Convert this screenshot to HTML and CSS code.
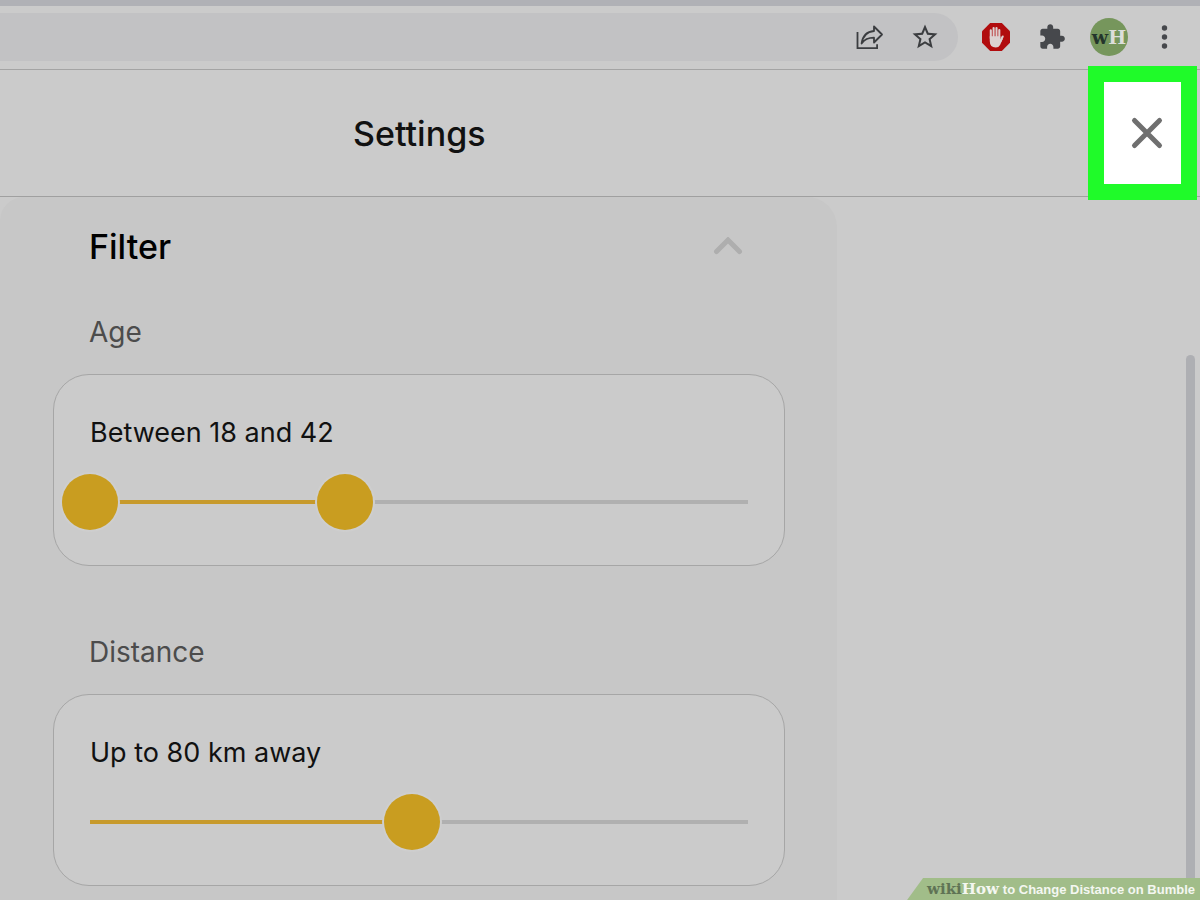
FILE: index.html
```
<!DOCTYPE html>
<html lang="en">
<head>
    <meta charset="UTF-8">
    <meta name="viewport" content="width=device-width, initial-scale=1.0">
    <title>Settings</title>
    <link rel="stylesheet" href="styles.css">
</head>
<body>

    <div class="toolbar">
        <div class="address-bar">
            <input type="text" class="address-input" aria-label="Address">
            <button class="icon-btn" aria-label="Share">
                <svg width="28" height="28" viewBox="0 0 28 28" fill="none" stroke="#3b3d40" stroke-width="1.8">
                    <path d="M1.5 9v16.2h19.6v-4"/>
                    <path d="M18 3.500l8 8-8 8v-4.800C12.500 14.700 8.700 16 5.600 20.500 6.600 13.500 11 8.600 18 8z" stroke-linejoin="round"/>
                </svg>
            </button>
            <button class="icon-btn" aria-label="Bookmark">
                <svg width="30" height="30" viewBox="0 0 24 24" fill="#3b3d40">
                    <path d="M22 9.240l-7.190-.62L12 2 9.190 8.630 2 9.240l5.460 4.730L5.820 21 12 17.270 18.180 21l-1.630-7.030L22 9.240zM12 15.400l-3.760 2.270 1-4.280-3.320-2.880 4.380-.38L12 6.100l1.710 4.040 4.380.38-3.320 2.880 1 4.280L12 15.400z"/>
                </svg>
            </button>
        </div>
        <button class="icon-btn" aria-label="AdBlock">
            <svg width="28" height="28" viewBox="0 0 28 28">
                <path d="M8.200 0h11.600L28 8.200v11.600L19.800 28H8.200L0 19.800V8.200z" fill="#b10c0e"/>
                <g stroke="#dcd2d2" stroke-width="2.100" stroke-linecap="round" fill="none">
                    <path d="M8.800 7.200v8M11.600 5v10M14.500 5v10M17.300 7v8M20.700 13.500l-2.700 5.500"/>
                </g>
                <path d="M7.750 13.200h10.600v3.300l1.600-1.300.8.800-2.700 6q-1.300 2.500-4.300 2.500-6 0-6-6.500z" fill="#dcd2d2"/>
            </svg>
        </button>
        <button class="icon-btn extensions" aria-label="Extensions">
            <svg width="28" height="28" viewBox="0 0 24 24" fill="#46484c">
                <path d="M20.500 11H19V7c0-1.100-.9-2-2-2h-4V3.500C13 2.120 11.880 1 10.500 1S8 2.120 8 3.500V5H4c-1.100 0-1.990.9-1.990 2v3.800H3.500c1.490 0 2.700 1.210 2.700 2.700s-1.210 2.700-2.700 2.700H2V20c0 1.100.9 2 2 2h3.800v-1.500c0-1.490 1.210-2.700 2.700-2.700 1.490 0 2.700 1.210 2.700 2.700V22H17c1.100 0 2-.9 2-2v-4h1.500c1.380 0 2.500-1.120 2.500-2.500S21.880 11 20.500 11z"/>
            </svg>
        </button>
        <button class="avatar"><span class="avatar-dark">w</span>H</button>
        <button class="icon-btn" aria-label="Menu">
            <svg width="24" height="24" viewBox="0 0 24 24" fill="#46484c">
                <circle cx="12.500" cy="3" r="2.700"/>
                <circle cx="12.500" cy="12" r="2.700"/>
                <circle cx="12.500" cy="21" r="2.700"/>
            </svg>
        </button>
    </div>

    <header class="page-header">
        <h1>Settings</h1>
        <button class="close-btn" aria-label="Close">
            <svg width="34" height="34" viewBox="0 0 34 34" stroke="#6f6f6f" stroke-width="5" stroke-linecap="round">
                <path d="M4.500 4.500l25 25M29.500 4.500l-25 25"/>
            </svg>
        </button>
    </header>

    <main class="content">
        <section class="panel">
            <div class="panel-header">
                <h2>Filter</h2>
                <button class="icon-btn" aria-label="Collapse filter">
                    <svg width="30" height="20" viewBox="0 0 30 20" fill="none" stroke="#aeaeae" stroke-width="5" stroke-linecap="round">
                        <path d="M3.500 14.500L15 3l11.500 11.500"/>
                    </svg>
                </button>
            </div>

            <h3>Age</h3>
            <div class="card">
                <label for="ageMax">Between 18 and 42</label>
                <div class="slider">
                    <div class="slider-track"><div class="slider-fill" style="width: 39%"></div></div>
                    <input type="range" id="ageMin" min="18" max="80" value="18" aria-label="Minimum age">
                    <input type="range" id="ageMax" min="18" max="80" value="42">
                </div>
            </div>

            <h3>Distance</h3>
            <div class="card">
                <label for="distance">Up to 80 km away</label>
                <div class="slider">
                    <div class="slider-track"><div class="slider-fill" style="width: 49%"></div></div>
                    <input type="range" id="distance" min="3" max="160" value="80">
                </div>
            </div>
        </section>
        <div class="scrollbar"></div>
    </main>

    <div class="watermark">
        <span class="brand"><span class="brand-wiki">wiki</span>How</span>
        <span>to Change Distance on Bumble</span>
    </div>

</body>
</html>
```
FILE: styles.css
```
* {
    box-sizing: border-box;
}

body {
    margin: 0;
    min-height: 100vh;
    display: flex;
    flex-direction: column;
    position: relative;
    background: #cbcbcb;
    color: #111;
    font-family: Inter, "Liberation Sans", sans-serif;
}

h1, h2, h3 {
    margin: 0;
}

button {
    padding: 0;
    border: none;
    background: none;
    cursor: pointer;
}

svg {
    display: block;
}

/* Browser toolbar */
.toolbar {
    display: flex;
    align-items: center;
    gap: 24px;
    height: 70px;
    padding: 0 24px 1px 0;
    border-top: 6px solid #b0b1b6;
    border-bottom: 1px solid #a4a4a4;
}

.address-bar {
    flex: 1;
    display: flex;
    align-items: center;
    gap: 26px;
    height: 48px;
    padding-right: 18px;
    background: #c2c2c4;
    border-radius: 0 24px 24px 0;
}

.address-input {
    flex: 1;
    min-width: 0;
    height: 48px;
    border: none;
    background: none;
    outline: none;
    font-size: 28px;
}

.extensions {
    padding-left: 4px;
}

.avatar {
    display: flex;
    justify-content: center;
    align-items: center;
    width: 38px;
    height: 38px;
    border-radius: 50%;
    background: #76965c;
    color: #dcdedb;
    font: bold 19px "DejaVu Serif", serif;
}

.avatar-dark {
    color: #24352c;
}

/* Page header */
.page-header {
    display: flex;
    align-items: center;
    justify-content: space-between;
    height: 127px;
    padding-right: 19px;
    border-bottom: 1px solid #a0a0a0;
}

h1 {
    width: 71%;
    padding-top: 2px;
    font-size: 34px;
    font-weight: 500;
    line-height: 40px;
    text-align: center;
}

.close-btn {
    display: flex;
    align-items: center;
    justify-content: center;
    position: relative;
    width: 77px;
    height: 102px;
    padding-left: 8px;
    background: #fff;
    outline: 16px solid #1ffb29;
}

/* Settings panel */
.content {
    flex: 1;
    display: flex;
    justify-content: space-between;
    padding-right: 5px;
}

.panel {
    width: 70%;
    padding: 30px 52px 14px 53px;
    background: #c7c7c7;
    border-radius: 24px 30px 0 0;
}

.panel-header {
    display: flex;
    align-items: center;
    justify-content: space-between;
    margin-bottom: 49px;
    padding: 0 42px 0 36px;
}

h2 {
    color: #000;
    font-size: 34px;
    font-weight: 500;
    line-height: 40px;
}

h3 {
    margin-bottom: 26px;
    padding-left: 36px;
    color: #4c4c4c;
    font-size: 28px;
    font-weight: 400;
    line-height: 32px;
}

.card {
    padding: 40px 8px 35px;
    background: #cbcbcb;
    border: 1px solid #a6a6a6;
    border-radius: 36px;
}

.card + h3 {
    margin-top: 70px;
}

.card label {
    display: block;
    margin-bottom: 23px;
    padding-left: 28px;
    font-size: 27px;
    line-height: 36px;
}

.slider {
    display: grid;
    align-items: center;
}

.slider > * {
    grid-area: 1 / 1;
}

.slider-track {
    height: 4px;
    margin: 0 28px;
    background: #b0b0b0;
}

.slider-fill {
    height: 4px;
    background: #c79a2c;
}

.slider input {
    -webkit-appearance: none;
    appearance: none;
    width: 100%;
    height: 56px;
    margin: 0;
    background: none;
    pointer-events: none;
}

.slider input::-webkit-slider-thumb {
    -webkit-appearance: none;
    width: 56px;
    height: 56px;
    border-radius: 50%;
    background: #c99d20;
    box-shadow: 0 0 0 2px #cecece;
    pointer-events: auto;
}

.scrollbar {
    width: 9px;
    margin-top: 158px;
    background: #aeafb3;
    border-radius: 5px 5px 0 0;
}

/* Caption in the bottom corner */
.watermark {
    position: absolute;
    right: 0;
    bottom: 0;
    display: flex;
    align-items: center;
    gap: 4px;
    height: 22px;
    padding: 0 5px 0 20px;
    background: #a1bd89;
    clip-path: polygon(16px 0, 100% 0, 100% 100%, 0 100%);
    color: #f4f7f1;
    font: bold 13px "Liberation Sans", sans-serif;
}

.brand {
    font-family: "DejaVu Serif", serif;
    font-size: 15px;
}

.brand-wiki {
    color: #5f7355;
}
```
